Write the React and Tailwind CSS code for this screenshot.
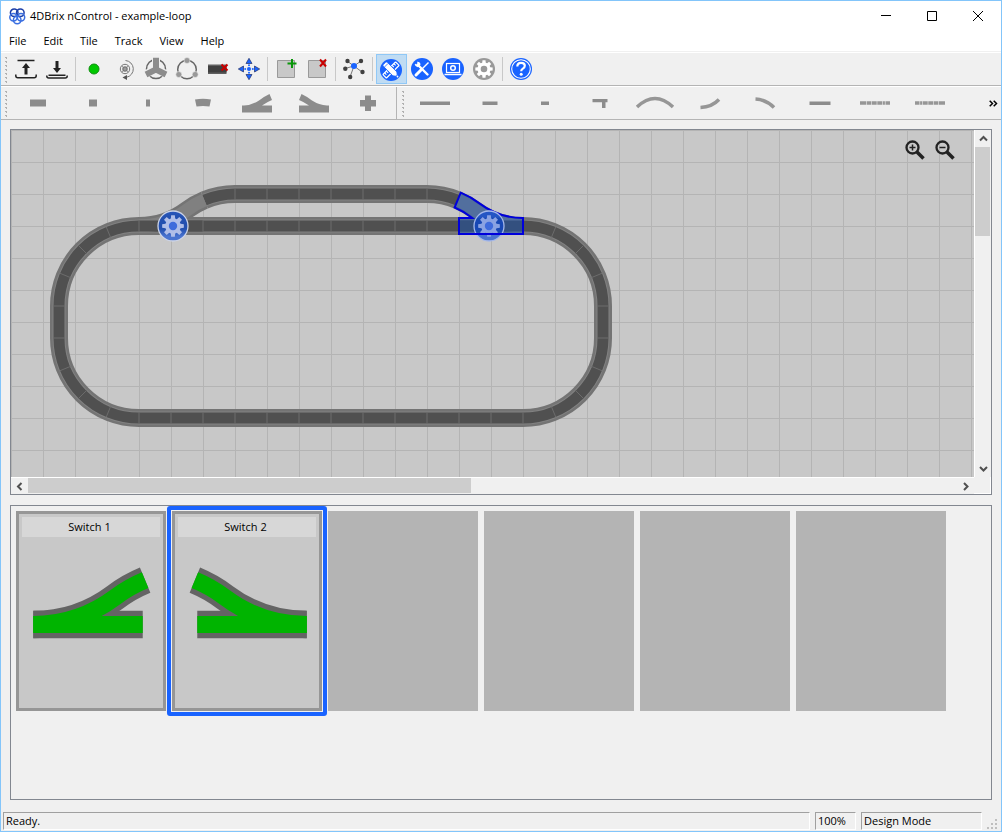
import React, { useState } from 'react';
import clsx from 'clsx';

const BLUE = '#1963ff';

const MENUS = ['File', 'Edit', 'Tile', 'Track', 'View', 'Help'];

// Shared drawings
const Cross = ({ x, y }) => (
    <path d={`M${x - 3} ${y - 3}l6 6m0-6l-6 6`} stroke="#c80000" strokeWidth="2" fill="none" />
);

const gearPath = (cx, cy, outer, inner) => {
    const points = [];
    for (let i = 0; i < 8; i++) {
        const a = (i * Math.PI) / 4;
        [[-0.28, inner], [-0.17, outer], [0.17, outer], [0.28, inner]].forEach(([da, r]) => {
            points.push(`${(cx + r * Math.sin(a + da)).toFixed(2)} ${(cy - r * Math.cos(a + da)).toFixed(2)}`);
        });
    }
    return `M${points.join('L')}Z`;
};

const icons = {
    upload: (
        <g fill="none" stroke="#222" strokeWidth="1.5">
            <path d="M3.5 3.5h17M1.8 17.5v1.2q0 2 2 2h16.400q2 0 2-2v-1.200" />
            <path d="M12 6l4 5h-2.500v6.500h-3V11H8z" fill="#222" stroke="none" />
        </g>
    ),
    download: (
        <g fill="none" stroke="#222" strokeWidth="1.5">
            <path d="M1.8 18.500v.5q0 2 2 2h16.400q2 0 2-2v-.5M3.500 18.300h17" />
            <path d="M12 16l4-5h-2.500V4h-3v7H8z" fill="#222" stroke="none" />
        </g>
    ),
    dot: <circle cx="12" cy="12" r="5" fill="#00c800" stroke="#109010" />,
    motor: (
        <g fill="none" stroke="#777">
            <circle cx="12" cy="12" r="4.700" />
            <circle cx="12" cy="12" r="2" strokeWidth="1.500" />
            <path d="M8.700 8.700l6.600 6.600m0-6.600l-6.600 6.600" strokeWidth=".7" />
            <path d="M12.500 3.500a8.500 8.500 0 0 1 1 16.800" />
            <path d="M14 18v5l-4.500-2.500z" fill="#555" stroke="none" />
        </g>
    ),
    wheel: (
        <g fill="none">
            <circle cx="12" cy="12" r="9.500" stroke="#666" strokeWidth="1.500" />
            <path d="M12 1v11M12 12l-10 5M12 12l10 5" stroke="#efefef" strokeWidth="8" />
            <path d="M12 .8v11.700L2 17.500M12 12.500l10 5" stroke="#8c8c8c" strokeWidth="6" />
        </g>
    ),
    ring: (
        <g>
            <circle cx="12" cy="12.500" r="9.300" stroke="#666" strokeWidth="1.500" fill="none" />
            <g fill="#999" stroke="#efefef" strokeWidth=".6">
                <circle cx="12" cy="3.500" r="3" />
                <circle cx="3.800" cy="17.500" r="3" />
                <circle cx="20.200" cy="17.500" r="3" />
            </g>
        </g>
    ),
    removeTrack: (
        <g>
            <path d="M2 7.500h18.500v9.500H2z" fill="#606060" />
            <path d="M2 9h18.500v6.500H2z" fill="#404040" />
            <Cross x={18.500} y={10.500} />
        </g>
    ),
    move: (
        <g fill={BLUE} stroke="#222f66" strokeWidth=".7">
            <path d="M12 1.300L15 6.500H9zM12 22.700L15 17.500H9zM1.300 12L6.500 9v6zM22.700 12L17.500 9v6z" />
            <g stroke="none">
                <circle cx="12" cy="12" r="2" />
                <circle cx="12" cy="8.200" r="1" />
                <circle cx="12" cy="15.800" r="1" />
                <circle cx="8.200" cy="12" r="1" />
                <circle cx="15.800" cy="12" r="1" />
            </g>
        </g>
    ),
    addTile: (
        <g>
            <path d="M3.500 3.500h17v17h-17z" fill="#c8c8c8" stroke="#999" />
            <path d="M18 2v9M13.500 6.500h9" stroke="#0a960a" strokeWidth="2" />
        </g>
    ),
    removeTile: (
        <g>
            <path d="M3.500 3.500h17v17h-17z" fill="#c8c8c8" stroke="#999" />
            <path d="M15 2.500l6 7m0-7l-6 7" stroke="#c80000" strokeWidth="2" />
        </g>
    ),
    network: (
        <g>
            <path d="M12 9L5 4M12 9l7-5M12 9l-9 2.500M12 9l8 6M12 9L8 20" stroke="#777" />
            <g fill="#404040">
                <circle cx="5.500" cy="4" r="2.200" />
                <circle cx="19" cy="4" r="2.200" />
                <circle cx="3.300" cy="11.700" r="2.200" />
                <circle cx="20.500" cy="15" r="2.200" />
                <circle cx="8.200" cy="20" r="2.200" />
            </g>
            <circle cx="12" cy="9" r="3" fill={BLUE} />
        </g>
    ),
    design: (
        <g transform="translate(0 1)">
            <circle cx="12" cy="12" r="11" fill={BLUE} />
            <g transform="rotate(-45 12 12)" fill="none" stroke="#fff" strokeWidth="1.200">
                <rect x="3" y="9.500" width="18" height="5" rx=".5" />
                <path d="M5.500 9.500v2.500M8 9.500V12M16 9.500V12M18.500 9.500V12" />
            </g>
            <g transform="rotate(45 12 12)">
                <path d="M4 9.200h13.500l2.500 2v1.600l-2.500 2H4q-1.300 0-1.300-1.300v-3Q2.700 9.200 4 9.200z" fill="#fff" stroke={BLUE} strokeWidth=".8" />
                <path d="M5.300 9.500v5" stroke={BLUE} strokeWidth=".7" />
                <circle cx="21.200" cy="12" r=".9" fill="#fff" />
            </g>
        </g>
    ),
    tools: (
        <g>
            <circle cx="12" cy="12" r="11" fill={BLUE} />
            <path d="M7 7l10.500 10.500" stroke="#fff" strokeWidth="2.400" strokeLinecap="round" />
            <path d="M4.700 7.200l2.500-2.500q3-.2 3.300 2.800L7.800 10.200Q5.200 10 4.700 7.200z" fill="#fff" />
            <path d="M4.600 5.900l1.500 1.500 1.500-1.500-1.500-1.900z" fill={BLUE} />
            <path d="M18.500 5.500L11 13" stroke="#fff" strokeWidth="1.500" />
            <path d="M11 13l-5 5" stroke="#fff" strokeWidth="3" strokeLinecap="round" />
        </g>
    ),
    monitor: (
        <g>
            <circle cx="12" cy="12" r="11" fill={BLUE} />
            <g fill="none" stroke="#fff">
                <rect x="5.500" y="6.500" width="13" height="9" strokeWidth="1.200" />
                <circle cx="12" cy="11" r="2.300" strokeWidth="1.500" />
                <path d="M3.500 17.500h17" strokeWidth="1.500" />
            </g>
        </g>
    ),
    settings: (
        <g>
            <circle cx="12" cy="12" r="11" fill="#999" />
            <path d={gearPath(12, 12, 8.800, 6.500)} fill="#fff" />
            <circle cx="12" cy="12" r="3.300" fill="#999" />
        </g>
    ),
    help: (
        <g>
            <circle cx="12" cy="12" r="11" fill={BLUE} />
            <circle cx="12" cy="12" r="9.300" fill="none" stroke="#fff" strokeWidth="1.100" />
            <path d="M8.300 9.500q0-3.700 3.800-3.700 3.700 0 3.700 3 0 1.700-1.900 2.800-1.700 1-1.700 2.700" fill="none" stroke="#fff" strokeWidth="2.200" />
            <circle cx="12.200" cy="17.300" r="1.500" fill="#fff" />
        </g>
    )
};

const MAIN_TOOLS = [
    [['upload', 'Open'], ['download', 'Save']],
    [['dot', 'Run'], ['motor', 'Rotate track'], ['wheel', 'Triangle'], ['ring', 'Circle'], ['removeTrack', 'Delete track'], ['move', 'Move layout']],
    [['addTile', 'Add tile'], ['removeTile', 'Remove tile']],
    [['network', 'Network']],
    [['design', 'Design mode'], ['tools', 'Configure mode'], ['monitor', 'Control mode'], ['settings', 'Settings']],
    [['help', 'Help']]
];

// Track pieces, drawn in a 40 x 24 box
const SWITCH_SMALL = 'M4 14.500h2Q14 14 21 9.500 27 5 31.500 3L34 9Q29 11 24 14.500h10v7H4z';

const TRACK_PIECES = [
    { name: 'Straight', art: <path d="M12 8.500h16v7H12z" /> },
    { name: 'Half straight', art: <path d="M16 8.500h8v7h-8z" /> },
    { name: 'Quarter straight', art: <path d="M18 8.500h4v7h-4z" /> },
    { name: 'Curve', art: <path d="M12 8.500q8-1.500 16 0l-1.500 7q-6.500-1-13 0z" /> },
    { name: 'Left switch', art: <path d={SWITCH_SMALL} /> },
    { name: 'Right switch', art: <path d={SWITCH_SMALL} transform="translate(40 0) scale(-1 1)" /> },
    { name: 'Crossing', art: <path d="M17 4.500h6v4.500h5v6.500h-5V20h-6v-4.500h-5V9h5z" /> }
];

const MONO_PIECES = [
    { name: 'Monorail straight', art: <path d="M5 10.500h30v3.500H5z" /> },
    { name: 'Monorail half', art: <path d="M12.500 10.500h15v3.500h-15z" /> },
    { name: 'Monorail quarter', art: <path d="M16 10.500h8v3.500h-8z" /> },
    { name: 'Monorail stop', art: <path d="M12.500 8h15v3.200h-2V17H22v-5.800h-9.500z" /> },
    { name: 'Monorail arc', art: <path d="M2 16Q20-1 38 16" fill="none" stroke="#969696" strokeWidth="3.500" /> },
    { name: 'Monorail left curve', art: <path d="M10.500 16.500Q22 16 29 8.500" fill="none" stroke="#969696" strokeWidth="3.500" /> },
    { name: 'Monorail right curve', art: <path d="M10.500 8Q21 8.500 29 16.500" fill="none" stroke="#969696" strokeWidth="3.500" /> },
    { name: 'Monorail short', art: <path d="M9.500 10.500h21v3.500h-21z" /> },
    { name: 'Ramp up', art: <path d="M5 12h30" stroke="#969696" strokeWidth="3.500" strokeDasharray="6 .6 4.500 .6 5 .6 5 .6 2 .6" /> },
    { name: 'Ramp down', art: <path d="M35 12H5" stroke="#969696" strokeWidth="3.500" strokeDasharray="6 .6 4.500 .6 5 .6 5 .6 2 .6" /> }
];

const Handle = () => (
    <svg className="mt-[3px] h-[28px] w-[10px] shrink-0" aria-hidden="true">
        {[0, 1, 2, 3, 4, 5, 6].map((i) => (
            <path key={i} d={`M4 ${i * 4 + 1}h2v2h-1v-1h-1z`} fill="#b0b0b0" />
        ))}
    </svg>
);

const ToolButton = ({ icon, label, active, onClick }) => (
    <button
        type="button"
        aria-label={label}
        onClick={onClick}
        className={clsx(
            'flex h-[30px] w-[31px] items-center justify-center border pr-px',
            active ? 'border-[#90c8f6] bg-[#c0dcf3]' : 'border-transparent'
        )}
    >
        <svg width="24" height="24" viewBox="0 0 24 24" className="shrink-0">{icons[icon]}</svg>
    </button>
);

const PieceButton = ({ piece }) => (
    <button type="button" aria-label={piece.name} className="flex h-[32px] w-[55px] items-center justify-center pr-px">
        <svg width="40" height="24" viewBox="0 0 40 24" fill="#8c8c8c">{piece.art}</svg>
    </button>
);

const Logo = () => (
    <svg width="17" height="17" viewBox="0 0 17 17" fill="none" strokeWidth="1.500">
        <g stroke="#1c3fa8">
            <circle cx="5.200" cy="4.800" r="3.800" />
            <circle cx="11.300" cy="4.800" r="3.800" />
        </g>
        <g stroke="#3b6fe0">
            <circle cx="4.500" cy="9.300" r="3.700" />
            <circle cx="12" cy="9.300" r="3.700" />
            <circle cx="8.200" cy="12" r="3.800" />
        </g>
    </svg>
);

const TitleBar = () => (
    <header className="flex h-[30px] items-center bg-white pl-2">
        <Logo />
        <h1 className="ml-1 flex-1 text-[11px] leading-4">4DBrix nControl - example-loop</h1>
        <button type="button" aria-label="Minimize" className="flex h-full w-[46px] items-center justify-center">
            <svg width="10" height="10"><path d="M0 4.500h10" stroke="#000" /></svg>
        </button>
        <button type="button" aria-label="Maximize" className="flex h-full w-[46px] items-center justify-center">
            <svg width="10" height="10"><path d="M.5.5h9v9h-9z" stroke="#000" fill="none" /></svg>
        </button>
        <button type="button" aria-label="Close" className="flex h-full w-[46px] items-center justify-center">
            <svg width="10" height="10"><path d="M0 0l10 10M10 0L0 10" stroke="#000" /></svg>
        </button>
    </header>
);

// Layout geometry: 32px per straight, curve radius 80
const LOOP = 'M128 96H512A80 80 0 0 1 592 176V208A80 80 0 0 1 512 288H128A80 80 0 0 1 48 208V176A80 80 0 0 1 128 96Z';
const SIDING = 'M193.400 70.100A80 80 0 0 1 224 64H416A80 80 0 0 1 446.600 70.100';
const BRANCH = 'M0 0A80 80 0 0 0 48-16A80 80 0 0 1 65.400-25.900';
const SWITCH_OUTLINE = 'M0-8A72 72 0 0 0 43.200-22.400A88 88 0 0 1 62.300-33.300L68.400-18.500A72 72 0 0 0 50.700-8H64V8H0Z';

const corner = (cx, cy, from) =>
    [0, 1, 2, 3, 4].map((i) => {
        const a = ((from + i * 22.5) * Math.PI) / 180;
        const c = Math.cos(a);
        const s = Math.sin(a);
        return `M${cx + 74 * c} ${cy + 74 * s}L${cx + 86 * c} ${cy + 86 * s}`;
    });

const JOINTS = [
    ...corner(128, 176, 180),
    ...corner(512, 176, 270),
    ...corner(512, 208, 0),
    ...corner(128, 208, 90),
    ...Array.from({ length: 11 }, (_, i) => `M${160 + i * 32} 90v12M${160 + i * 32} 282v12`),
    ...Array.from({ length: 7 }, (_, i) => `M${224 + i * 32} 58v12`)
].join('');

const Rail = ({ d }) => (
    <g fill="none">
        <path d={d} stroke="#747474" strokeWidth="18" />
        <path d={d} stroke="#828282" strokeWidth="13" />
        <path d={d} stroke="#505050" strokeWidth="11" />
    </g>
);

const SwitchGear = ({ x, y, tooth = '#b0bee8', ring = '#ccd4e8', face = 'url(#gear)' }) => (
    <g>
        <circle cx={x} cy={y} r="15" fill={face} stroke={ring} strokeWidth="1.300" />
        <path d={gearPath(x, y, 11, 7.800)} fill={tooth} />
        <circle cx={x} cy={y} r="4.200" fill="#3f6bdc" />
    </g>
);

const TrackCanvas = () => (
    <svg className="block h-[347px] w-full bg-[#c8c8c8]" role="img" aria-label="Track layout">
        <defs>
            <pattern id="grid" width="32" height="32" patternUnits="userSpaceOnUse">
                <path d="M0 .5h32M.5 0v32" stroke="#b4b4b4" />
            </pattern>
            <linearGradient id="gear" x1="0" y1="0" x2="0" y2="1">
                <stop offset="0" stopColor="#2a58bd" />
                <stop offset=".2" stopColor="#2350b0" />
                <stop offset=".6" stopColor="#2350b0" />
                <stop offset=".85" stopColor="#4a74d0" />
                <stop offset="1" stopColor="#4a74d0" />
            </linearGradient>
            <linearGradient id="gear-selected" x1="0" y1="0" x2="0" y2="1">
                <stop offset=".2" stopColor="#2456c4" />
                <stop offset=".25" stopColor="#1848b4" />
                <stop offset=".7" stopColor="#1848b4" />
                <stop offset=".8" stopColor="#4a74d0" />
            </linearGradient>
        </defs>
        <rect width="100%" height="100%" fill="url(#grid)" />

        <g fill="none">
            <path d={BRANCH} transform="translate(128 96)" stroke="#747474" strokeWidth="18" />
            <path d={BRANCH} transform="translate(512 96) scale(-1 1)" stroke="#747474" strokeWidth="18" />
        </g>
        <Rail d={SIDING} />
        <Rail d={LOOP} />
        <path d={BRANCH} transform="translate(128 96)" stroke="#808080" strokeWidth="13" fill="none" />
        <path d={BRANCH} transform="translate(512 96) scale(-1 1)" stroke="#808080" strokeWidth="13" fill="none" />
        <path d="M128 96H192M448 96H512" stroke="#505050" strokeWidth="11" />
        <path d={JOINTS} stroke="#6c6c6c" fill="none" />

        <path
            d={SWITCH_OUTLINE}
            transform="translate(512 96) scale(-1 1)"
            fill="#0050d2"
            fillOpacity=".36"
            stroke="#0000dc"
            strokeWidth="2"
        />
        <SwitchGear x={162} y={96} />
        <SwitchGear x={478} y={96} tooth="#8aa2e2" ring="#a4b8ea" face="url(#gear-selected)" />
        <path d="M448 104h64" stroke="#0000dc" strokeWidth="2" />
    </svg>
);

const ScrollArrow = ({ d, label }) => (
    <button type="button" aria-label={label} className="flex size-[17px] shrink-0 items-center justify-center">
        <svg width="9" height="9" viewBox="0 0 9 9"><path d={d} stroke="#505050" strokeWidth="2" fill="none" /></svg>
    </button>
);

const LayoutView = () => (
    <section className="grid grid-cols-[1fr_17px] grid-rows-[347px_17px] border border-[#828790]">
        <div className="relative overflow-hidden">
            <TrackCanvas />
            <div className="absolute top-2 right-[17px] flex gap-[6px]">
                <button type="button" aria-label="Zoom in">
                    <svg width="24" height="24" viewBox="0 0 24 24" className="block" fill="none" stroke="#222">
                        <circle cx="9.500" cy="9.500" r="6" strokeWidth="2.300" />
                        <path d="M6.500 9.500h6M9.500 6.500v6" strokeWidth="1.500" />
                        <path d="M14 14l6.500 6.500" strokeWidth="3.500" />
                    </svg>
                </button>
                <button type="button" aria-label="Zoom out">
                    <svg width="24" height="24" viewBox="0 0 24 24" className="block" fill="none" stroke="#222">
                        <circle cx="9.500" cy="9.500" r="6" strokeWidth="2.300" />
                        <path d="M6.500 9.500h6" strokeWidth="1.500" />
                        <path d="M14 14l6.500 6.500" strokeWidth="3.500" />
                    </svg>
                </button>
            </div>
        </div>
        <div className="flex flex-col border-l border-white bg-[#f0f0f0]">
            <ScrollArrow label="Scroll up" d="M1 6.500L4.500 3 8 6.500" />
            <div className="mr-px h-[89px] bg-[#cdcdcd]" />
            <div className="flex-1" />
            <ScrollArrow label="Scroll down" d="M1 3l3.500 3.500L8 3" />
        </div>
        <div className="flex border-t border-white bg-[#f0f0f0]">
            <ScrollArrow label="Scroll left" d="M6.500 1L3 4.500 6.500 8" />
            <div className="mb-px w-[46%] bg-[#cdcdcd]" />
            <div className="flex-1" />
            <ScrollArrow label="Scroll right" d="M3 1l3.500 3.500L3 8" />
        </div>
        <div className="border-r border-b border-white bg-[#f0f0f0]" />
    </section>
);

const SwitchArt = ({ mirrored }) => (
    <svg width="144" height="110" viewBox="0 0 144 110" className="block">
        <g transform={mirrored ? 'translate(131.700 87.500) scale(-1.710 1.710)' : 'translate(14.300 87.500) scale(1.710)'} fill="none">
            <path d={BRANCH} stroke="#646464" strokeWidth="16" />
            <path d="M0 0H64" stroke="#646464" strokeWidth="16" />
            <path d={BRANCH} stroke="#00b400" strokeWidth="10" />
            <path d="M0 0H64" stroke="#00b400" strokeWidth="10" />
        </g>
    </svg>
);

const SwitchCard = ({ item, selected, onSelect }) => (
    <button
        type="button"
        onClick={onSelect}
        className={clsx(
            'relative flex h-[200px] w-[150px] flex-col border-[3px] border-[#969696] bg-[#c8c8c8] p-[3px]',
            selected && 'after:absolute after:-inset-[8px] after:rounded-[3px] after:border-4 after:border-[#1963ff]'
        )}
    >
        <span className="h-[20px] w-full bg-[#d7d7d7] pr-[3px] text-[11px] leading-[20px]">{item.name}</span>
        <span className="-mx-[3px]"><SwitchArt mirrored={item.mirrored} /></span>
    </button>
);

const SWITCHES = [
    { id: 1, name: 'Switch 1', mirrored: false },
    { id: 2, name: 'Switch 2', mirrored: true }
];

const App = () => {
    const [mode, setMode] = useState('design');
    const [selected, setSelected] = useState(2);

    return (
        <div className="flex min-h-screen flex-col border border-[#83c5fa] bg-[#f0f0f0] font-['Open_Sans',sans-serif] text-black">
            <TitleBar />

            <nav className="flex h-[20px] items-center gap-px bg-white">
                {MENUS.map((menu) => (
                    <button key={menu} type="button" className="px-2 text-[11px] leading-4">{menu}</button>
                ))}
            </nav>

            {/* Main toolbar */}
            <div className="mt-px flex h-[34px] border-t border-b border-t-white border-b-[#b4b4b4]">
                <Handle />
                <div className="mt-px flex">
                    {MAIN_TOOLS.map((group, index) => (
                        <React.Fragment key={group[0][0]}>
                            {index > 0 && <div className="mx-[2px] mt-[3px] h-[24px] w-[2px] border-l border-[#c8c8c8]" />}
                            {group.map(([icon, label]) => (
                                <ToolButton
                                    key={icon}
                                    icon={icon}
                                    label={label}
                                    active={mode === icon}
                                    onClick={() => setMode(icon)}
                                />
                            ))}
                        </React.Fragment>
                    ))}
                </div>
            </div>

            {/* Track pieces */}
            <div className="flex h-[34px] border-t border-b border-t-white border-b-[#b4b4b4]">
                <Handle />
                {TRACK_PIECES.map((piece) => <PieceButton key={piece.name} piece={piece} />)}
                <div className="w-[2px] border-l border-[#b4b4b4]" />
                <Handle />
                {MONO_PIECES.map((piece) => <PieceButton key={piece.name} piece={piece} />)}
                <button type="button" aria-label="More tools" className="ml-auto flex w-4 items-center justify-center">
                    <svg width="9" height="7" viewBox="0 0 9 7" fill="none" stroke="#000" strokeWidth="1.500">
                        <path d="M.7.7L3.500 3.500.7 6.300M4.700.7L7.500 3.500 4.700 6.300" />
                    </svg>
                </button>
            </div>

            <main className="flex flex-1 flex-col gap-[10px] px-[9px] pt-[9px]">
                <LayoutView />
                <section className="flex-1 border border-[#828790] p-[5px]">
                    <div className="flex gap-[6px]">
                        {SWITCHES.map((item) => (
                            <SwitchCard
                                key={item.id}
                                item={item}
                                selected={selected === item.id}
                                onSelect={() => setSelected(item.id)}
                            />
                        ))}
                        {[3, 4, 5, 6].map((slot) => <div key={slot} className="h-[200px] w-[150px] bg-[#b4b4b4]" />)}
                    </div>
                </section>
            </main>

            <footer className="mt-3 mb-px flex h-[18px] gap-[5px] pr-[3px] pl-[2px] text-[11px] leading-[16px]">
                <div className="flex-1 border border-[#a0a0a0] border-r-white border-b-white pl-[2px]">Ready.</div>
                <div className="w-[41px] border border-[#a0a0a0] border-r-white border-b-white pl-[2px]">100%</div>
                <div className="w-[121px] border border-[#a0a0a0] border-r-white border-b-white pl-[2px]">Design Mode</div>
                <svg width="11" height="11" className="self-end" fill="#bfbfbf" aria-hidden="true">
                    <path d="M8 0h2v2H8zM8 4h2v2H8zM8 8h2v2H8zM4 4h2v2H4zM4 8h2v2H4zM0 8h2v2H0z" />
                </svg>
            </footer>
        </div>
    );
};

export default App;
